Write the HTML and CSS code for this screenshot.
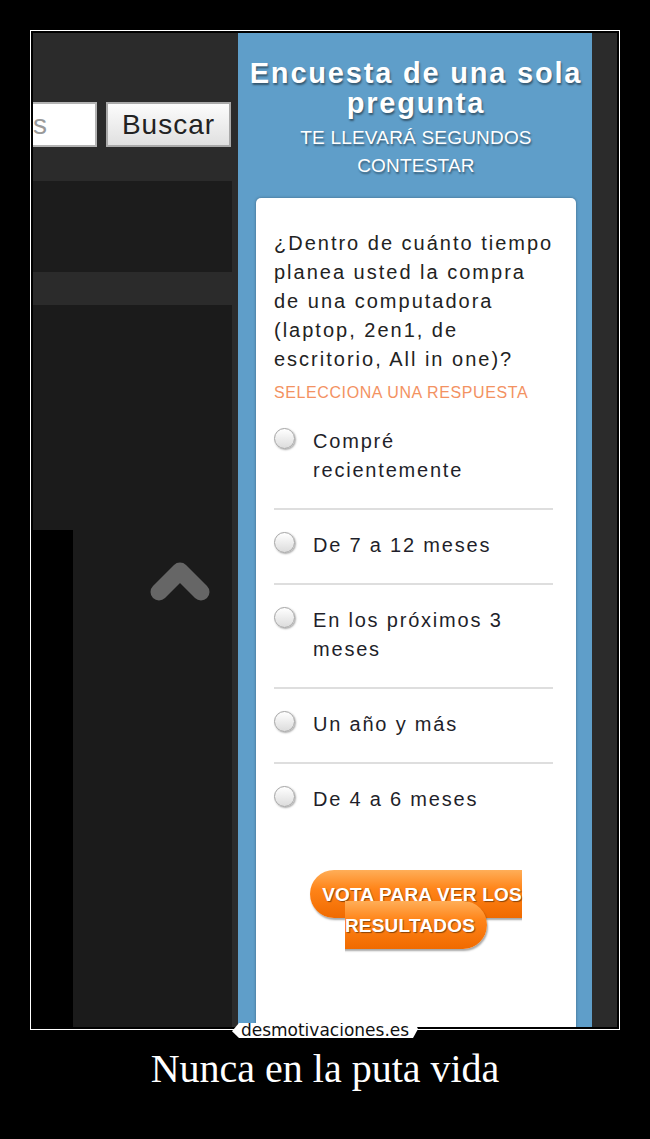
FILE: index.html
```html
<!DOCTYPE html>
<html lang="es">
<head>
  <meta charset="UTF-8" />
  <title>Nunca en la puta vida</title>
  <link rel="stylesheet" href="styles.css">
</head>
<body>
  <div class="poster">
    <div class="frame">
      <div class="shot">
        <!-- pagina de fondo -->
        <div class="site">
          <div class="site-head">
            <div class="search">
              <div class="search-box">s</div>
              <button class="search-btn">Buscar</button>
            </div>
          </div>
          <div class="site-bar"></div>
          <div class="site-strip"></div>
          <div class="site-main">
            <div class="side-col"></div>
            <svg class="to-top" width="60" height="46" viewBox="0 0 60 46">
              <polyline points="9,34 30,13 51,34" fill="none" stroke="#666" stroke-width="17" stroke-linecap="round" stroke-linejoin="round" />
            </svg>
          </div>
        </div>
        <div class="gutter"></div>

        <!-- encuesta -->
        <div class="survey">
          <h2 class="survey-title">Encuesta de una sola pregunta</h2>
          <p class="survey-sub">Te llevará segundos contestar</p>
          <div class="card">
            <p class="question">¿Dentro de cuánto tiempo<br>planea usted la compra<br>de una computadora<br>(laptop, 2en1, de<br>escritorio, All in one)?</p>
            <p class="hint">Selecciona una respuesta</p>
            <ul class="options">
              <li><span class="radio"></span><span class="label">Compré recientemente</span></li>
              <li><span class="radio"></span><span class="label">De 7 a 12 meses</span></li>
              <li><span class="radio"></span><span class="label">En los próximos 3 meses</span></li>
              <li><span class="radio"></span><span class="label">Un año y más</span></li>
              <li><span class="radio"></span><span class="label">De 4 a 6 meses</span></li>
            </ul>
            <div class="vote"><a class="vote-btn" href="#">VOTA PARA VER LOS RESULTADOS</a></div>
          </div>
        </div>
        <div class="gutter gutter-right"></div>
      </div>
      <div class="watermark">desmotivaciones.es</div>
    </div>
    <p class="caption">Nunca en la puta vida</p>
  </div>
</body>
</html>
```

FILE: styles.css
```css
html, body {
  margin: 0;
  padding: 0;
  background: #000;
}

.poster {
  width: 650px;
}

.frame {
  position: relative;
  width: 584px;
  margin: 30px auto 0;
  padding: 2px;
  border: 1px solid #fff;
}

.shot {
  display: flex;
  height: 994px;
  overflow: hidden;
}

/* pagina de fondo */
.site {
  width: 199px;
  display: flex;
  flex-direction: column;
  background: #1b1b1b;
}

.site-head {
  height: 148px;
  padding-top: 69px;
  box-sizing: border-box;
  background: #2b2b2b;
}

.search {
  display: flex;
  gap: 9px;
  height: 45px;
}

.search-box {
  width: 64px;
  box-sizing: border-box;
  background: #fff;
  border: 2px solid #b3b3b3;
  border-left: none;
  font: 28px/41px "Liberation Sans", Arial, sans-serif;
  color: #9a9a9a;
  overflow: hidden;
}

.search-btn {
  width: 125px;
  padding: 0;
  border: 2px solid #a9a9a9;
  background: linear-gradient(#fcfcfc, #e0e0e0);
  font: 28px "Liberation Sans", Arial, sans-serif;
  letter-spacing: 1px;
  color: #222;
}

.site-bar {
  height: 91px;
  background: #1c1c1c;
}

.site-strip {
  height: 33px;
  background: #2b2b2b;
}

.site-main {
  flex: 1;
  display: flex;
  position: relative;
  background: #1b1b1b;
}

.side-col {
  width: 40px;
  margin-top: 225px;
  background: #000;
}

.to-top {
  position: absolute;
  left: 117px;
  top: 253px;
}

.gutter {
  width: 6px;
  background: #2b2b2b;
}

.gutter-right {
  width: 25px;
}

/* encuesta */
.survey {
  width: 354px;
  padding: 25px 0 0 2px;
  box-sizing: border-box;
  background: #5f9ec9;
  color: #fff;
  text-align: center;
  font-family: "Liberation Sans", Arial, sans-serif;
}

.survey-title {
  margin: 0;
  font-size: 29px;
  line-height: 30px;
  letter-spacing: 1.8px;
  text-shadow: 1px 2px 2px rgba(0, 0, 0, 0.45);
}

.survey-sub {
  margin: 6px 40px 0;
  font-size: 19px;
  line-height: 28px;
  letter-spacing: 0.2px;
  text-transform: uppercase;
  text-shadow: 1px 2px 2px rgba(0, 0, 0, 0.4);
}

.card {
  width: 320px;
  min-height: 900px;
  margin: 18px 0 0 16px;
  padding: 31px 23px 0 18px;
  box-sizing: border-box;
  background: #fff;
  border-radius: 5px;
  box-shadow: 0 0 3px rgba(0, 0, 0, 0.35);
  text-align: left;
  color: #222;
}

.question {
  margin: 0;
  font-size: 20px;
  line-height: 29px;
  letter-spacing: 2px;
  white-space: nowrap;
}

.hint {
  margin: 9px 0 3px;
  font-size: 16px;
  line-height: 20px;
  letter-spacing: 0.6px;
  text-transform: uppercase;
  color: #f39262;
}

.options {
  list-style: none;
  margin: 0;
  padding: 0;
}

.options li {
  display: flex;
  align-items: flex-start;
  gap: 18px;
  padding: 21px 0 23px;
  border-bottom: 2px solid #dedede;
  font-size: 20px;
  line-height: 29px;
  letter-spacing: 1.8px;
  color: #1f1f2a;
}

.options li:last-child {
  border-bottom: none;
}

.label {
  max-width: 215px;
}

.radio {
  flex: none;
  width: 21px;
  height: 21px;
  margin-top: 1px;
  box-sizing: border-box;
  border: 1px solid #a4a4a4;
  border-radius: 50%;
  background: linear-gradient(#fff, #dcdcdc);
  box-shadow: 1px 1px 2px rgba(0, 0, 0, 0.35);
}

.vote {
  margin: 41px -5px 0 0;
  text-align: center;
  font-size: 19px;
  line-height: 31px;
  font-weight: bold;
}

.vote-btn {
  padding: 13.5px 12px;
  border-radius: 24px;
  background: linear-gradient(#ffae58, #ff8418 40%, #f06a00);
  box-shadow: 1px 2px 2px rgba(0, 0, 0, 0.35);
  color: #fff;
  text-decoration: none;
  letter-spacing: 0.2px;
  text-shadow: 1px 1px 1px rgba(0, 0, 0, 0.45);
}

/* marca de agua */
.watermark {
  position: absolute;
  left: 50%;
  bottom: -9px;
  width: 186px;
  height: 15px;
  transform: translateX(-50%);
  background: #fff;
  clip-path: polygon(7px 0, calc(100% - 3px) 0, 100% 40%, calc(100% - 5px) 100%, 7px 100%, 0 55%);
  font: 17px/15px "DejaVu Sans", sans-serif;
  color: #111;
  text-align: center;
}

.caption {
  margin: 16px 0 0;
  text-align: center;
  font: 40px/46px "Liberation Serif", "Times New Roman", serif;
  color: #fff;
}
```
